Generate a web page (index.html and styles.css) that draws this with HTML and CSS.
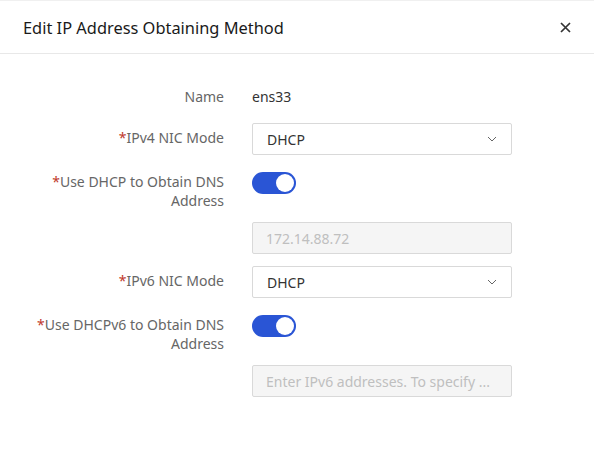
FILE: index.html
```
<!DOCTYPE html>
<html lang="en">
<head>
    <meta charset="UTF-8">
    <meta name="viewport" content="width=device-width, initial-scale=1.0">
    <title>Edit IP Address Obtaining Method</title>
    <link rel="stylesheet" href="styles.css">
</head>
<body>
    <div class="dialog">
        <div class="dialog-header">
            <span class="dialog-title">Edit IP Address Obtaining Method</span>
            <a href="javascript:;" class="close">
                <svg width="11" height="11" viewBox="0 0 11 11"><path d="M1 1L10 10M10 1L1 10" stroke="#333" stroke-width="1.7" fill="none"/></svg>
            </a>
        </div>
        <div class="dialog-body">
            <div class="form">
                <div class="label first">Name</div>
                <div class="control"><span class="text">ens33</span></div>

                <div class="label"><i>*</i>IPv4 NIC Mode</div>
                <div class="control">
                    <div class="select">DHCP
                        <svg width="10" height="6" viewBox="0 0 10 6"><path d="M1 1L5 5L9 1" stroke="#666" stroke-width="1" fill="none"/></svg>
                    </div>
                </div>

                <div class="label"><i>*</i>Use DHCP to Obtain DNS Address</div>
                <div class="control"><span class="switch"></span></div>

                <div class="label"></div>
                <div class="control"><div class="input disabled">172.14.88.72</div></div>

                <div class="label"><i>*</i>IPv6 NIC Mode</div>
                <div class="control">
                    <div class="select">DHCP
                        <svg width="10" height="6" viewBox="0 0 10 6"><path d="M1 1L5 5L9 1" stroke="#666" stroke-width="1" fill="none"/></svg>
                    </div>
                </div>

                <div class="label"><i>*</i>Use DHCPv6 to Obtain DNS Address</div>
                <div class="control"><span class="switch"></span></div>

                <div class="label"></div>
                <div class="control"><div class="input disabled">Enter IPv6 addresses. To specify ...</div></div>
            </div>
        </div>
    </div>
</body>
</html>
```
FILE: styles.css
```
*{
    margin: 0;
    padding: 0;
    box-sizing: border-box;
}
body{
    font-family: "Noto Sans", "Open Sans", sans-serif;
    background: #fff;
    color: #333;
}
.dialog{
    width: 594px;
    height: 452px;
    border-top: 1px solid #f0f0f0;
}
.dialog-header{
    height: 53px;
    border-bottom: 1px solid #e8e8e8;
    display: flex;
    align-items: center;
    justify-content: space-between;
    padding: 0 23px 0 23px;
}
.dialog-title{
    font-size: 16.4px;
    color: #1a1a1a;
}
.close{
    display: flex;
    width: 11px;
    height: 11px;
}
.dialog-body{
    padding-top: 25px;
}
.form{
    display: grid;
    grid-template-columns: 224px 260px;
    column-gap: 28px;
    row-gap: 12px;
}
.label{
    font-size: 14px;
    line-height: 19px;
    color: #666;
    text-align: right;
    padding-top: 5px;
    padding-left: 20px;
}
.label.first{
    padding-top: 8px;
}
.label i{
    font-style: normal;
    color: #c0392b;
}
.control{
    min-height: 32px;
    display: flex;
    align-items: flex-start;
}
.text{
    font-size: 14px;
    line-height: 19px;
    padding-top: 8px;
    color: #333;
}
.select, .input{
    width: 260px;
    height: 32px;
    border: 1px solid #d9d9d9;
    border-radius: 2px;
    font-size: 14px;
    padding: 0 14px;
    display: flex;
    align-items: center;
    justify-content: space-between;
    color: #333;
}
.input.disabled{
    background: #f5f5f5;
    color: #bfbfbf;
    padding: 0 13px;
}
.switch{
    position: relative;
    width: 44px;
    height: 22px;
    margin-top: 5px;
    border-radius: 11px;
    background: #2a55d5;
}
.switch::after{
    content: "";
    position: absolute;
    right: 2px;
    top: 2px;
    width: 18px;
    height: 18px;
    border-radius: 50%;
    background: #fff;
}
```
